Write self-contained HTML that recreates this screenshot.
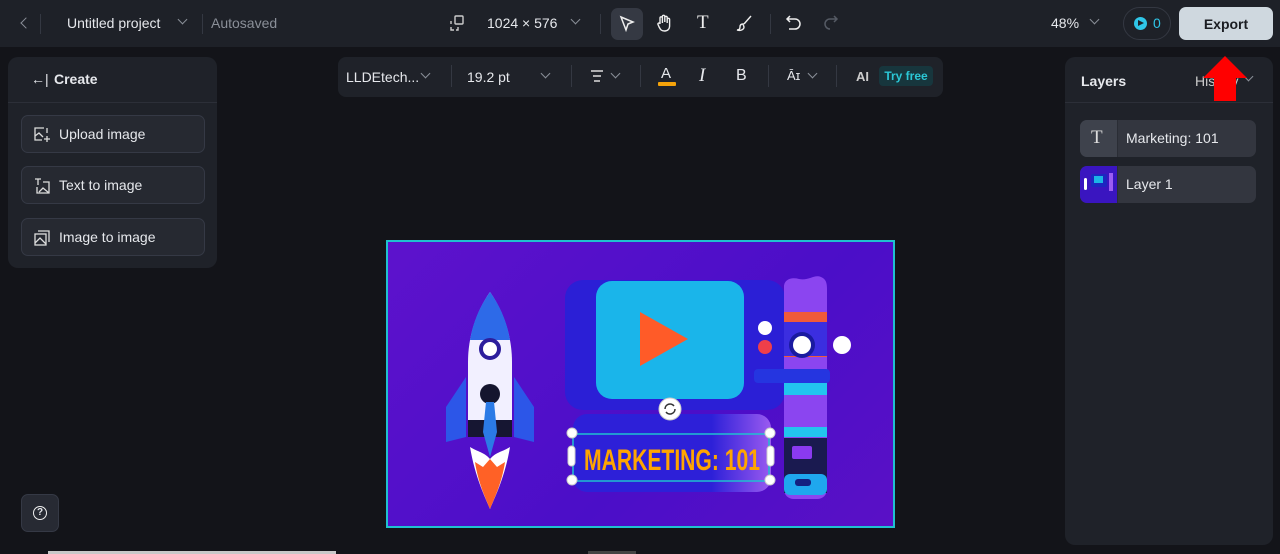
<!DOCTYPE html>
<html><head><meta charset="utf-8"><style>
*{box-sizing:border-box;margin:0;padding:0}
body{width:1280px;height:554px;background:#131419;font-family:"Liberation Sans",sans-serif;color:#e6e8ec;position:relative;overflow:hidden;font-size:14px}
.a{position:absolute}
.top{left:0;top:0;width:1280px;height:47px;background:#1e2128}
.chev{display:block;width:7px;height:7px;border-right:1.3px solid #8a8f98;border-bottom:1.3px solid #8a8f98;transform:rotate(45deg)}
.panel{background:#1f2229;border-radius:10px}
.btn{left:21px;width:184px;height:38px;border:1px solid #353945;background:#262931;border-radius:7px;font-size:14px;padding:10px 0 0 37px}
.btn svg{position:absolute;left:12px;top:11px}
.layer{left:1080px;width:176px;height:37px;background:#33363f;border-radius:7px;font-size:14px;padding:10px 0 0 46px}
.thumb{position:absolute;left:0;top:0;width:38px;height:37px;border-radius:7px 0 0 7px;background:#3e424c;border-right:1px solid #2a2d35}
</style></head><body>
<div class="a top"></div>
<div class="a" style="left:22px;top:19px;width:8px;height:8px;border-left:1.5px solid #8a8f98;border-bottom:1.5px solid #8a8f98;transform:rotate(45deg)"></div>
<div class="a" style="left:40px;top:14px;width:1px;height:20px;background:#343842"></div>
<div class="a" style="left:67px;top:15px;font-size:14px;color:#e6e8ec">Untitled project</div>
<div class="a" style="left:179px;top:16px"><span class="chev"></span></div>
<div class="a" style="left:202px;top:14px;width:1px;height:20px;background:#343842"></div>
<div class="a" style="left:211px;top:15px;color:#8a8f98">Autosaved</div>
<svg class="a" style="left:450px;top:15px" width="15" height="16" viewBox="0 0 15 16" fill="none" stroke="#ccc" stroke-width="1.4"><rect x="5" y="1" width="8" height="8" rx="1"/><path d="M1 6v3M1 12v3h3M8 12v3h-2"/></svg>
<div class="a" style="left:487px;top:15px">1024 × 576</div>
<div class="a" style="left:572px;top:16px"><span class="chev"></span></div>
<div class="a" style="left:600px;top:14px;width:1px;height:20px;background:#343842"></div>
<div class="a" style="left:611px;top:8px;width:32px;height:32px;background:#353943;border-radius:7px"></div>
<svg class="a" style="left:619px;top:15px" width="16" height="17" viewBox="0 0 16 17" fill="none" stroke="#eee" stroke-width="1.5"><path d="M2 2l12 5-5 2-2 6z"/></svg>
<svg class="a" style="left:656px;top:14px" width="17" height="19" viewBox="0 0 17 19" fill="none" stroke="#eee" stroke-width="1.4"><path d="M4 10V4a1.2 1.2 0 012.4 0v5M6.4 8V2.5a1.2 1.2 0 012.4 0V8M8.8 8V3.5a1.2 1.2 0 012.4 0V9M11.2 9V5.5a1.2 1.2 0 012.4 0V12c0 3-2 5-5 5s-4-1-5.5-4L2 10.5a1.1 1.1 0 011.8-1.2L4 10"/></svg>
<div class="a" style="left:697px;top:12px;font-family:'Liberation Serif',serif;font-size:19px;color:#eee">T</div>
<svg class="a" style="left:736px;top:15px" width="17" height="17" viewBox="0 0 17 17" fill="none" stroke="#eee" stroke-width="1.4"><path d="M15 1L8 9M7 9c-2 0-3 1-3 3s-1 3-3 3c3 1 7 0 7-3z"/></svg>
<div class="a" style="left:770px;top:14px;width:1px;height:20px;background:#343842"></div>
<svg class="a" style="left:785px;top:15px" width="17" height="16" viewBox="0 0 17 16" fill="none" stroke="#eee" stroke-width="1.5"><path d="M5 1L2 4l3 3M2 4h8a5 5 0 010 10H4"/></svg>
<svg class="a" style="left:822px;top:15px" width="17" height="16" viewBox="0 0 17 16" fill="none" stroke="#555a64" stroke-width="1.5"><path d="M12 1l3 3-3 3M15 4H8a5 5 0 000 10"/></svg>
<div class="a" style="left:1051px;top:15px">48%</div>
<div class="a" style="left:1091px;top:16px"><span class="chev"></span></div>
<div class="a" style="left:1123px;top:7px;width:48px;height:33px;border:1px solid #343842;border-radius:17px"></div>
<div class="a" style="left:1134px;top:17px;width:13px;height:13px;border-radius:50%;background:#2fc6e8"></div>
<div class="a" style="left:1138px;top:20px;width:0;height:0;border-left:6px solid #1e2128;border-top:3.5px solid transparent;border-bottom:3.5px solid transparent"></div>
<div class="a" style="left:1153px;top:15px;color:#2fc6e8">0</div>
<div class="a" style="left:1179px;top:7px;width:94px;height:33px;background:#cfd8df;border-radius:7px;color:#1b1d22;font-weight:bold;text-align:center;padding-top:9px;font-size:14px">Export</div>

<div class="a panel" style="left:8px;top:57px;width:209px;height:211px"></div>
<div class="a" style="left:8px;top:102px;width:209px;height:1px;background:#2c2f38"></div>
<div class="a" style="left:31px;top:71px;font-size:14px">←|</div>
<div class="a" style="left:54px;top:71px;font-weight:bold;font-size:14px">Create</div>
<div class="a btn" style="top:115px"><svg width="16" height="16" viewBox="0 0 16 16" fill="none" stroke="#ddd" stroke-width="1.3"><path d="M10 1H1v12h7M1 9l4-3 4 4M13 9v6M10 12h6M13 1v5"/></svg>Upload image</div>
<div class="a btn" style="top:166px"><svg width="16" height="16" viewBox="0 0 16 16" fill="none" stroke="#ddd" stroke-width="1.3"><path d="M1 1h6M4 1v6M9 4h6v11H3V9M5 14l4-4 6 5"/></svg>Text to image</div>
<div class="a btn" style="top:218px"><svg width="16" height="16" viewBox="0 0 16 16" fill="none" stroke="#ddd" stroke-width="1.3"><rect x="1" y="4" width="11" height="11"/><path d="M4 1h11v11M1 13l5-5 6 6"/></svg>Image to image</div>
<div class="a" style="left:21px;top:494px;width:38px;height:38px;border:1px solid #353945;background:#272a33;border-radius:7px"></div>
<div class="a" style="left:33px;top:506px;width:14px;height:14px;border:1.3px solid #eee;border-radius:50%;font-size:10px;text-align:center;line-height:12px;font-weight:bold">?</div>
<div class="a" style="left:48px;top:551px;width:288px;height:3px;background:#c8c8c8"></div>
<div class="a" style="left:588px;top:551px;width:48px;height:3px;background:#444"></div>

<div class="a panel" style="left:338px;top:57px;width:605px;height:40px;border-radius:8px"></div>
<div class="a" style="left:346px;top:69px">LLDEtech...</div>
<div class="a" style="left:422px;top:70px"><span class="chev"></span></div>
<div class="a" style="left:451px;top:65px;width:1px;height:22px;background:#343842"></div>
<div class="a" style="left:467px;top:69px">19.2 pt</div>
<div class="a" style="left:542px;top:70px"><span class="chev"></span></div>
<div class="a" style="left:571px;top:65px;width:1px;height:22px;background:#343842"></div>
<svg class="a" style="left:590px;top:70px" width="14" height="12" viewBox="0 0 14 12" stroke="#ddd" stroke-width="1.4"><path d="M1 1h12M3 6h8M4 11h6"/></svg>
<div class="a" style="left:612px;top:70px"><span class="chev"></span></div>
<div class="a" style="left:640px;top:65px;width:1px;height:22px;background:#343842"></div>
<div class="a" style="left:661px;top:65px;font-size:15px">A</div>
<div class="a" style="left:658px;top:82px;width:18px;height:4px;background:#f5a30a;border-radius:1px"></div>
<div class="a" style="left:699px;top:65px;font-family:'Liberation Serif',serif;font-style:italic;font-size:19px">I</div>
<div class="a" style="left:736px;top:67px;font-size:16px">B</div>
<div class="a" style="left:768px;top:65px;width:1px;height:22px;background:#343842"></div>
<div class="a" style="left:787px;top:68px;font-size:13px">Āɪ</div>
<div class="a" style="left:809px;top:70px"><span class="chev"></span></div>
<div class="a" style="left:836px;top:65px;width:1px;height:22px;background:#343842"></div>
<div class="a" style="left:856px;top:69px;font-size:13px;font-weight:bold;color:#ccc">AI</div>
<div class="a" style="left:879px;top:66px;width:54px;height:20px;background:#17363d;border-radius:4px;color:#2bc7d6;font-size:12px;font-weight:bold;text-align:center;padding-top:3px">Try free</div>

<div class="a panel" style="left:1065px;top:57px;width:208px;height:488px"></div>
<div class="a" style="left:1065px;top:102px;width:208px;height:1px;background:#2c2f38"></div>
<div class="a" style="left:1081px;top:73px;font-weight:bold">Layers</div>
<div class="a" style="left:1195px;top:73px;color:#ccc">History</div>
<div class="a" style="left:1245px;top:73px"><span class="chev"></span></div>
<div class="a layer" style="top:120px"><div class="thumb"><span style="position:absolute;left:11px;top:7px;font-family:'Liberation Serif',serif;font-size:19px;color:#ddd">T</span></div>Marketing: 101</div>
<div class="a layer" style="top:166px"><div class="thumb" style="background:#3a15c0;overflow:hidden"><div style="position:absolute;left:11px;top:8px;width:16px;height:13px;background:#1d26c0;border-radius:2px"></div><div style="position:absolute;left:14px;top:10px;width:9px;height:7px;background:#1cb4e6"></div><div style="position:absolute;left:4px;top:12px;width:3px;height:12px;background:#fff;border-radius:2px"></div><div style="position:absolute;left:29px;top:7px;width:4px;height:18px;background:#9b5df2"></div></div>Layer 1</div>

<svg class="a" style="left:1201px;top:56px" width="48" height="45" viewBox="0 0 48 45"><path d="M24 0L46 22H35V45H13V22H2z" fill="#f00"/></svg>

<div class="a" style="left:386px;top:240px;width:509px;height:288px;border:2px solid #1fc1cf;background:linear-gradient(135deg,#5d12cc,#4b0ec8 60%,#5a10c6)"></div>
<svg class="a" style="left:388px;top:242px" width="505" height="284" viewBox="0 0 505 284">
 <defs><linearGradient id="g1" x1="0" x2="1"><stop offset="0" stop-color="#2d20d8"/><stop offset=".7" stop-color="#2d20d8"/><stop offset="1" stop-color="#9a5af0"/></linearGradient></defs>
 <path d="M58 200l0-35 20-30v60z" fill="#2c56e8"/>
 <path d="M146 200l0-35-20-30v60z" fill="#2c56e8"/>
 <path d="M102 50c-14 20-22 45-22 70v72h44v-72c0-25-8-50-22-70z" fill="#f2f0ff"/>
 <path d="M102 50c-10 14-17 30-20 48h40c-3-18-10-34-20-48z" fill="#2d6ae8"/>
 <rect x="80" y="178" width="44" height="17" fill="#161632"/>
 <circle cx="102" cy="107" r="9" fill="#fff" stroke="#2d1e9c" stroke-width="4"/>
 <circle cx="102" cy="152" r="10" fill="#15152e"/>
 <path d="M98 160h8l3 30-7 25-7-25z" fill="#2b7ae6"/>
 <path d="M82 205c5 30 15 50 20 62 5-12 15-32 20-62-8 5-14 5-20 12-6-7-12-7-20-12z" fill="#fff"/>
 <path d="M87 220l8 5 7-8 7 8 8-5c-3 20-10 35-15 47-5-12-12-27-15-47z" fill="#ff6126"/>
 <rect x="177" y="38" width="220" height="130" rx="18" fill="#2b1fd6"/>
 <rect x="208" y="39" width="148" height="118" rx="16" fill="#1ab5ea"/>
 <path d="M252 70l48 27-48 27z" fill="#ff5b28"/>
 <circle cx="377" cy="86" r="7" fill="#fff"/>
 <circle cx="377" cy="105" r="7" fill="#ef3f4a"/>
 <rect x="185" y="172" width="198" height="78" rx="14" fill="url(#g1)"/>
 <path d="M396 45c0-8 8-10 15-8 10 2 15-5 22-2 5 2 6 6 6 12v200c0 6-4 10-10 10h-23c-6 0-10-4-10-10z" fill="#8b45f0"/>
 <rect x="396" y="70" width="43" height="45" fill="#f05a3a"/>
 <rect x="396" y="80" width="43" height="34" fill="#3b2ee0"/>
 <circle cx="414" cy="103" r="13" fill="#1a1aa0"/>
 <circle cx="414" cy="103" r="9" fill="#fff"/>
 <circle cx="454" cy="103" r="9" fill="#fff"/>
 <rect x="366" y="127" width="76" height="14" rx="4" fill="#2535e0"/>
 <rect x="396" y="141" width="43" height="12" fill="#22c5ef"/>
 <rect x="396" y="185" width="43" height="10" fill="#22c5ef"/>
 <rect x="396" y="196" width="43" height="55" fill="#1a1a50"/>
 <rect x="404" y="204" width="20" height="13" rx="2" fill="#8a3af0"/>
 <rect x="396" y="232" width="43" height="21" rx="6" fill="#1fa7ee"/>
 <rect x="407" y="237" width="16" height="7" rx="3" fill="#142080"/>
 <rect x="185" y="192" width="196" height="47" fill="none" stroke="#1fc1cf" stroke-width="1.5"/>
 <text x="196" y="228" font-family="Liberation Sans Narrow,Liberation Sans,sans-serif" font-weight="bold" font-size="30" fill="#ffa500" textLength="176" lengthAdjust="spacingAndGlyphs">MARKETING: 101</text>
 <circle cx="282" cy="167" r="11" fill="#fff" stroke="#ccc"/>
 <path d="M277 167a5 5 0 019-3M287 167a5 5 0 01-9 3" fill="none" stroke="#333" stroke-width="1.5"/>
 <g fill="#fff" stroke="#ccc"><circle cx="184" cy="191" r="5"/><circle cx="382" cy="191" r="5"/><circle cx="184" cy="238" r="5"/><circle cx="382" cy="238" r="5"/><rect x="180" y="204" width="7" height="20" rx="3.5"/><rect x="379" y="204" width="7" height="20" rx="3.5"/></g>
</svg>
</body></html>
